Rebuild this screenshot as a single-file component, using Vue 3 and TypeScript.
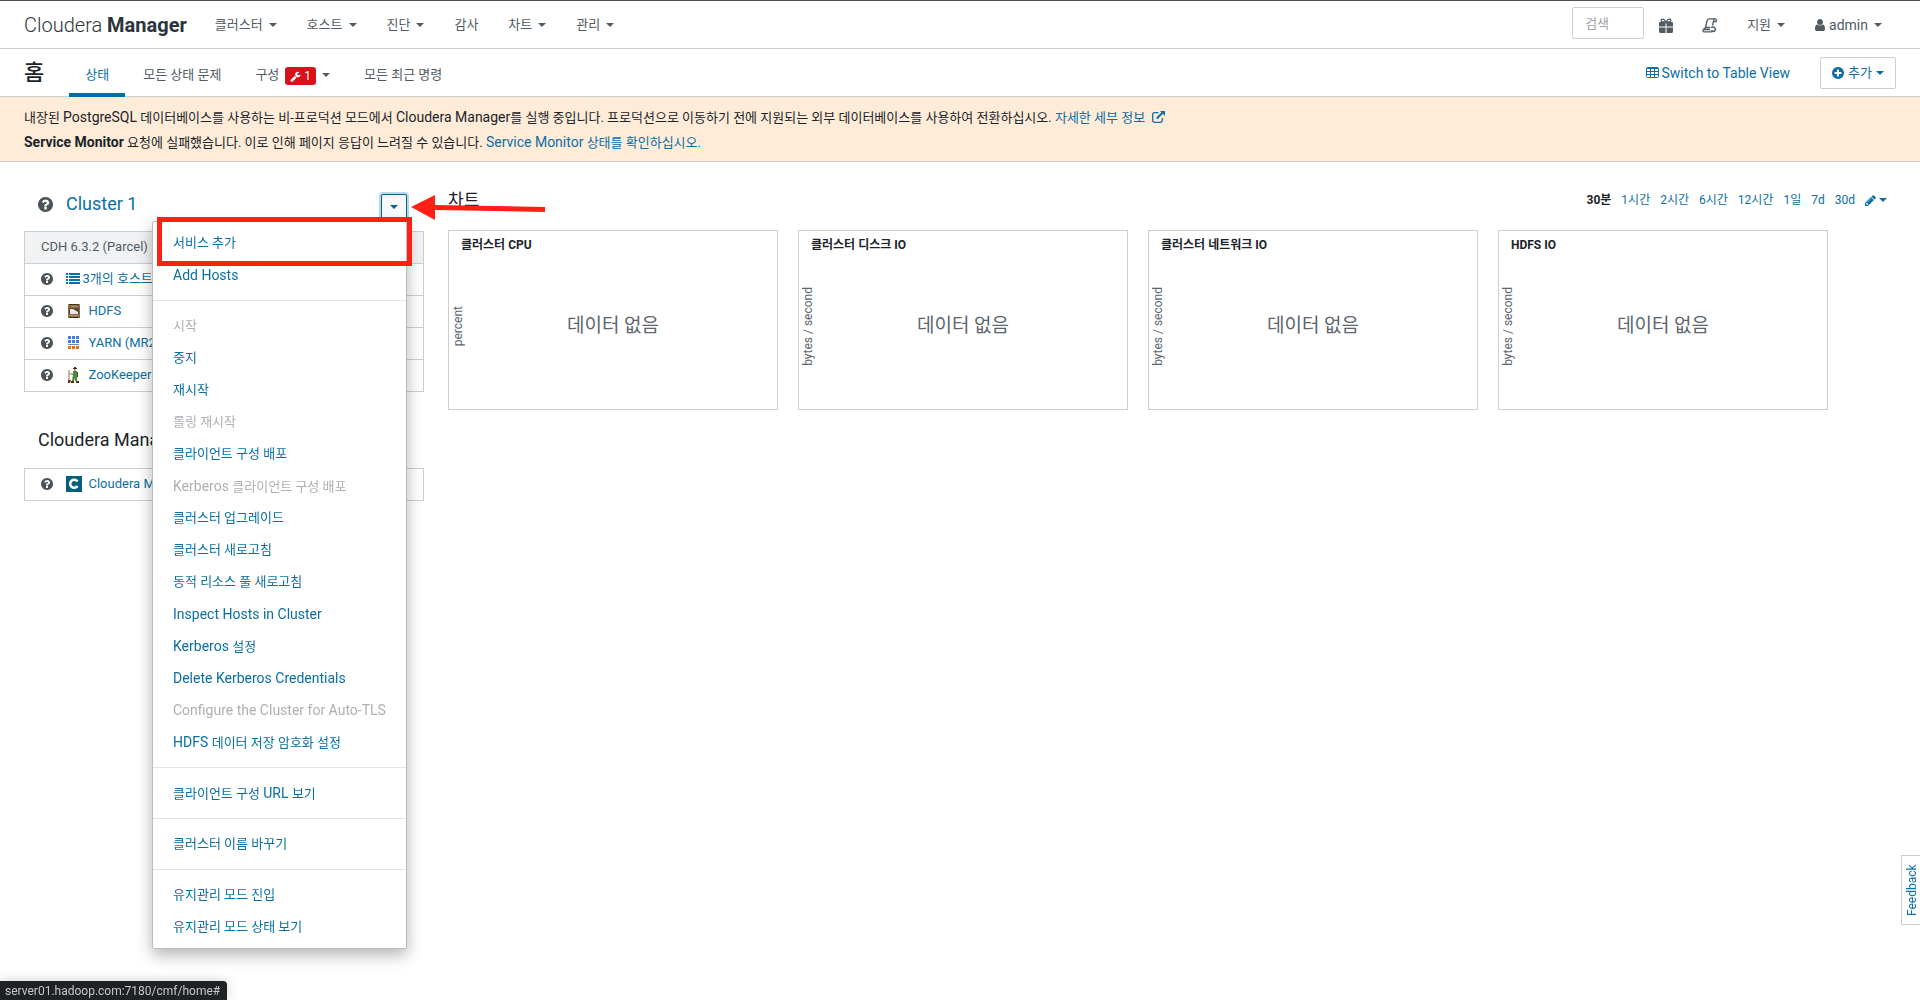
<script setup lang="ts">
import { ref } from 'vue'

interface NavItem { label: string; caret: boolean }
interface MenuItem { label: string; disabled?: boolean }
interface Chart { title: string; unit: string }
interface Run { text: string; latin: boolean }

const search = ref('')

const nav: NavItem[] = [
  { label: '클러스터', caret: true },
  { label: '호스트', caret: true },
  { label: '진단', caret: true },
  { label: '감사', caret: false },
  { label: '차트', caret: true },
  { label: '관리', caret: true },
]

const menu: MenuItem[][] = [
  [{ label: '서비스 추가' }, { label: 'Add Hosts' }],
  [
    { label: '시작', disabled: true },
    { label: '중지' },
    { label: '재시작' },
    { label: '롤링 재시작', disabled: true },
    { label: '클라이언트 구성 배포' },
    { label: 'Kerberos 클라이언트 구성 배포', disabled: true },
    { label: '클러스터 업그레이드' },
    { label: '클러스터 새로고침' },
    { label: '동적 리소스 풀 새로고침' },
    { label: 'Inspect Hosts in Cluster' },
    { label: 'Kerberos 설정' },
    { label: 'Delete Kerberos Credentials' },
    { label: 'Configure the Cluster for Auto-TLS', disabled: true },
    { label: 'HDFS 데이터 저장 암호화 설정' },
  ],
  [{ label: '클라이언트 구성 URL 보기' }],
  [{ label: '클러스터 이름 바꾸기' }],
  [{ label: '유지관리 모드 진입' }, { label: '유지관리 모드 상태 보기' }],
]

// Latin words are set one size larger than the Hangul around them.
function runs(label: string): Run[] {
  return label
    .split(/([A-Za-z][A-Za-z -]*)/)
    .filter((text) => text !== '')
    .map((text) => ({ text, latin: /^[A-Za-z]/.test(text) }))
}

const services = ['hosts', 'hdfs', 'yarn', 'zookeeper'] as const
const serviceNames: Record<(typeof services)[number], string> = {
  hosts: '3개의 호스트',
  hdfs: 'HDFS',
  yarn: 'YARN (MR2 Included)',
  zookeeper: 'ZooKeeper',
}

const charts: Chart[] = [
  { title: '클러스터 CPU', unit: 'percent' },
  { title: '클러스터 디스크 IO', unit: 'bytes / second' },
  { title: '클러스터 네트워크 IO', unit: 'bytes / second' },
  { title: 'HDFS IO', unit: 'bytes / second' },
]

const ranges = ['30분', '1시간', '2시간', '6시간', '12시간', '1일', '7d', '30d']

const questionPath =
  'M1024 1376v-192q0-14-9-23t-23-9h-192q-14 0-23 9t-9 23v192q0 14 9 23t23 9h192q14 0 23-9t9-23zm256-672q0-88-55.5-163t-138.5-116-170-41q-243 0-371 213-15 24 8 42l132 100q7 6 19 6 16 0 25-12 53-68 86-92 34-24 86-24 48 0 85.5 26t37.5 59q0 38-20 61t-68 45q-63 28-115.5 86.5t-52.5 125.5v36q0 14 9 23t23 9h192q14 0 23-9t9-23q0-19 21.5-49.5t54.5-49.5q32-18 49-28.5t46-35 44.5-48 28-60.5 12.5-81zm384 192q0 209-103 385.5t-279.5 279.5-385.5 103-385.5-103-279.5-279.5-103-385.5 103-385.5 279.5-279.5 385.5-103 385.5 103 279.5 279.5 103 385.5z'
</script>

<template>
  <div class="page">
    <header class="topbar">
      <a href="#" class="brand">Cloudera <b>Manager</b></a>
      <nav class="nav">
        <a v-for="n in nav" :key="n.label" href="#">{{ n.label }}<i v-if="n.caret" class="caret"></i></a>
      </nav>
      <div class="tools">
        <input v-model="search" class="search" type="text" placeholder="검색" aria-label="검색" />
        <button class="icon-btn gift" type="button" aria-label="Parcel">
          <svg width="14" height="15" viewBox="0 0 14 15" fill="currentColor">
            <path d="M7 4.500C5.500 .5 2 .2 2.200 2.600 2.300 4 4.500 4.300 7 4.500 9.500 4.300 11.700 4 11.800 2.600 12 .2 8.500 .5 7 4.500z" fill="none" stroke="currentColor" stroke-width="1.300" />
            <path d="M1 4h5.500v4.500H0V5a1 1 0 0 1 1-1zM7.500 4H13a1 1 0 0 1 1 1v3.500H7.500zM0 9.500h6.500V15H1.500A1.500 1.500 0 0 1 0 13.500zM7.500 9.500H14v4a1.500 1.500 0 0 1-1.500 1.500h-5z" />
          </svg>
        </button>
        <button class="icon-btn scroll" type="button" aria-label="최근 명령">
          <svg width="16" height="15" viewBox="0 0 16 15" fill="none" stroke="currentColor" stroke-width="1.300">
            <path d="M3.500 9.500 5 3C5.300 1.500 6 .8 7 .8h6.200c1 0 1.500 1.200 1 2.700h-2.500M12.500 1c-1 .5-1 2-1.300 3.500l-.6 3M8 11.500H2.200C.6 11.500.5 13.800 2 13.800h7.500M1.500 11.300 3.500 9.500H8" />
            <path d="M9.300 9.800a2.300 2.300 0 1 1 .3 3.200" stroke-width="1.500" />
            <path d="m8.500 12.500 2.500-.5-1.200 2.400z" fill="currentColor" stroke="none" />
          </svg>
        </button>
        <a href="#" class="support">지원<i class="caret"></i></a>
        <a href="#" class="user">
          <svg width="10" height="12" viewBox="256 128 1280 1536" fill="currentColor">
            <path d="M1536 1399q0 109-62.500 187t-150.500 78h-854q-88 0-150.500-78t-62.500-187q0-85 8.500-160.500t31.500-152 58.500-131 94-89 134.500-34.500q131 128 313 128t313-128q76 0 134.500 34.500t94 89 58.500 131 31.500 152 8.500 160.500zm-256-887q0 159-112.500 271.500t-271.500 112.500-271.500-112.500-112.500-271.500 112.500-271.500 271.500-112.500 271.500 112.500 112.500 271.500z" />
          </svg>
          <span>admin</span><i class="caret"></i>
        </a>
      </div>
    </header>

    <div class="subbar">
      <h1>홈</h1>
      <nav class="tabs">
        <a href="#" class="active">상태</a>
        <a href="#">모든 상태 문제</a>
        <a href="#">구성
          <span class="badge">
            <svg width="11" height="11" viewBox="0 0 1792 1792" fill="currentColor">
              <path d="M448 1472q0-26-19-45t-45-19-45 19-19 45 19 45 45 19 45-19 19-45zm644-420l-682 682q-37 37-90 37-52 0-91-37l-106-108q-38-36-38-90 0-53 38-91l681-681q39 98 114.500 173.500t173.500 114.500zm634-435q0 39-23 106-47 134-164.500 217.500t-258.500 83.500q-185 0-316.500-131.500t-131.500-316.500 131.500-316.500 316.500-131.500q58 0 121.500 16.500t107.500 46.500q16 11 16 28t-16 28l-293 169v224l193 107q5-3 79-48.500t135.500-81 70.500-35.500q15 0 23.500 10t8.500 25z" />
            </svg>
            <span>1</span>
          </span>
          <i class="caret"></i>
        </a>
        <a href="#">모든 최근 명령</a>
      </nav>
      <div class="actions">
        <a href="#" class="switch">
          <svg width="13" height="11" viewBox="0 0 13 11" fill="none" stroke="currentColor">
            <rect x=".5" y=".5" width="12" height="10" rx="1" />
            <path d="M1 1.500h11M1 4.500h11M1 7.500h11M4.500 1v9M8.500 1v9" />
          </svg>
          Switch to Table View
        </a>
        <button class="add" type="button">
          <svg width="12" height="12" viewBox="128 128 1536 1536" fill="currentColor">
            <path d="M1344 960v-128q0-26-19-45t-45-19h-256v-256q0-26-19-45t-45-19h-128q-26 0-45 19t-19 45v256h-256q-26 0-45 19t-19 45v128q0 26 19 45t45 19h256v256q0 26 19 45t45 19h128q26 0 45-19t19-45v-256h256q26 0 45-19t19-45zm320-64q0 209-103 385.500t-279.500 279.500-385.500 103-385.500-103-279.500-279.500-103-385.500 103-385.500 279.500-279.500 385.500-103 385.500 103 279.500 279.500 103 385.500z" />
          </svg>
          <span>추가</span><i class="caret"></i>
        </button>
      </div>
    </div>

    <section class="notice">
      <p>
        내장된 <span class="name">PostgreSQL</span> 데이터베이스를 사용하는 비-프로덕션 모드에서 <span class="name">Cloudera Manager</span>를 실행 중입니다. 프로덕션으로 이동하기 전에 지원되는 외부 데이터베이스를 사용하여 전환하십시오.
        <a href="#">자세한 세부 정보
          <svg class="ext" width="13" height="12" viewBox="0 0 13 12" fill="none" stroke="currentColor" stroke-width="1.300">
            <path d="M6.500 1.700H2.500A1.800 1.800 0 0 0 .7 3.500v6a1.800 1.800 0 0 0 1.800 1.800h6a1.800 1.800 0 0 0 1.800-1.800V7" />
            <path d="M4.800 7.500 10.500 1.800" stroke-width="2" />
            <path d="M8 0h5v5z" fill="currentColor" stroke="none" />
          </svg>
        </a>
      </p>
      <p>
        <b class="name">Service Monitor</b> 요청에 실패했습니다. 이로 인해 페이지 응답이 느려질 수 있습니다.
        <a href="#"><span class="name">Service Monitor</span> 상태를 확인하십시오.</a>
      </p>
    </section>

    <main class="content">
      <aside class="side">
        <div class="cluster-head">
          <svg class="q" width="15" height="15" viewBox="128 128 1536 1536"><path :d="questionPath" /></svg>
          <h2><a href="#">Cluster 1</a></h2>
          <div class="dropdown">
            <button class="toggle" type="button" aria-label="Cluster 1"><i class="caret"></i></button>
            <div class="menu">
              <ul v-for="(group, g) in menu" :key="g">
                <li v-for="m in group" :key="m.label">
                  <a href="#" :class="{ disabled: m.disabled }"><span v-for="(r, i) in runs(m.label)" :key="i" :class="{ latin: r.latin }">{{ r.text }}</span></a>
                </li>
              </ul>
              <div class="highlight"></div>
            </div>
            <svg class="arrow" width="134" height="26" viewBox="0 0 134 26" fill="#ff2015">
              <path d="M0 12 24 0V10L134 12V17L24 15V25z" />
            </svg>
          </div>
        </div>

        <table class="services">
          <thead>
            <tr><th colspan="2">CDH 6.3.2 (Parcel)</th></tr>
          </thead>
          <tbody>
            <tr v-for="s in services" :key="s">
              <td class="status"><svg class="q" width="12" height="12" viewBox="128 128 1536 1536"><path :d="questionPath" /></svg></td>
              <td>
                <a href="#" :class="['service', s]">
                  <svg v-if="s === 'hosts'" width="14" height="11" viewBox="0 0 14 11" fill="currentColor">
                    <path d="M0 0h2v2H0zM3 0h11v2H3zM0 3h2v2H0zM3 3h11v2H3zM0 6h2v2H0zM3 6h11v2H3zM0 9h2v2H0zM3 9h11v2H3z" />
                  </svg>
                  <svg v-else-if="s === 'hdfs'" width="16" height="16" viewBox="0 0 16 16">
                    <path d="M3 1h10l1 2v11l-1 1H3l-1-1V3z" fill="#8a6a42" />
                    <path d="M3 1h10l1 1H2zM2 14h12l-1 1H3z" fill="#4d3517" />
                    <path d="M3 5h10v6H3z" fill="#5c4526" />
                    <path d="M4 6h3l5 3v2H4z" fill="#e8e6ef" />
                    <path d="M5 3h6v1H5zM3 12h10v1H3z" fill="#b39664" />
                  </svg>
                  <svg v-else-if="s === 'yarn'" width="16" height="16" viewBox="0 0 16 16">
                    <path d="M2 1h3v3H2zM6 1h3v3H6zM10 1h3v3h-3zM2 5h3v3H2zM6 5h3v3H6zM10 5h3v3h-3z" fill="#3f7fd6" />
                    <path d="M2 9h11v1H2z" fill="#7b8790" />
                    <path d="M2 11h3v3H2zM6 11h3v3H6zM10 11h3v3h-3z" fill="#e5701c" />
                  </svg>
                  <svg v-else width="16" height="16" viewBox="0 0 16 16">
                    <path d="M3 3v12" stroke="#8c6a4a" />
                    <path d="M2 13h3l-1 3H2z" fill="#5a3a22" />
                    <path d="M7 1h4v1H7zM8 0h2v1H8z" fill="#263a5c" />
                    <path d="M8 2h2v2H8z" fill="#c98a5e" />
                    <path d="M7 4h4l1 6h-1v4H9v-3l-1 3H6l1-6-3-1V6l3 1z" fill="#4f8a3c" />
                    <path d="M11 5h1v5h-1z" fill="#2f5c26" />
                    <path d="M5 14h3v2H5zM10 14h3v2h-3z" fill="#4a2f1c" />
                  </svg>
                  <span>{{ serviceNames[s] }}</span>
                </a>
              </td>
            </tr>
          </tbody>
        </table>

        <h2 class="mgmt-title">Cloudera Management Service</h2>
        <table class="services">
          <tbody>
            <tr>
              <td class="status"><svg class="q" width="12" height="12" viewBox="128 128 1536 1536"><path :d="questionPath" /></svg></td>
              <td>
                <a href="#" class="service">
                  <svg width="16" height="16" viewBox="0 0 16 16">
                    <path d="M0 0h16v16H0z" fill="#045f7d" />
                    <path d="M11.500 5.500A4 4 0 1 0 11.500 10" fill="none" stroke="#fff" stroke-width="2.500" />
                  </svg>
                  <span>Cloudera Management Service</span>
                </a>
              </td>
            </tr>
          </tbody>
        </table>
      </aside>

      <section class="charts">
        <div class="charts-head">
          <h2>차트</h2>
          <div class="ranges">
            <a v-for="(r, i) in ranges" :key="r" href="#" :class="{ current: i === 0 }">{{ r }}</a>
            <button class="edit" type="button" aria-label="편집">
              <svg width="11" height="11" viewBox="128 128 1536 1536" fill="currentColor">
                <path d="M491 1536l91-91-235-235-91 91v107h128v128h107zm523-928q0-22-22-22-10 0-17 7l-542 542q-7 7-7 17 0 22 22 22 10 0 17-7l542-542q7-7 7-17zm-54-192l416 416-832 832h-416v-416zm683 96q0 53-37 90l-166 166-416-416 166-165q36-38 90-38 53 0 91 38l235 234q37 39 37 91z" />
              </svg>
              <i class="caret"></i>
            </button>
          </div>
        </div>
        <div class="grid">
          <article v-for="c in charts" :key="c.title" class="chart">
            <h3>{{ c.title }}</h3>
            <div class="plot">
              <span class="unit">{{ c.unit }}</span>
              <span class="empty">데이터 없음</span>
            </div>
          </article>
        </div>
      </section>
    </main>

    <button class="feedback" type="button">Feedback</button>
    <div class="statusbar">server01.hadoop.com:7180/cmf/home#</div>
  </div>
</template>

<style>
body {
  margin: 0;
  background: #fff;
}
</style>

<style scoped>
* {
  box-sizing: border-box;
}
.page {
  min-height: 100vh;
  font: 13px/20px Roboto, 'Noto Sans CJK KR', sans-serif;
  color: #1b2329;
  border-top: 1px solid #505058;
}
a {
  color: #0b6fa4;
  text-decoration: none;
}
button {
  font: inherit;
  padding: 0;
  border: 0;
  background: none;
  cursor: pointer;
}
h1, h2, h3, p, ul {
  margin: 0;
  padding: 0;
  list-style: none;
  font-weight: 400;
}
svg {
  flex: none;
}
.caret {
  display: inline-block;
  flex: none;
  border: 4px solid transparent;
  border-top-color: currentColor;
  border-bottom: 0;
}
.topbar, .subbar {
  display: flex;
  align-items: center;
  height: 48px;
  padding: 0 24px;
  border-bottom: 1px solid #ccced2;
}
.topbar {
  padding-top: 1px;
}
.brand {
  font-size: 20px;
  font-weight: 300;
  color: #2b343a;
}
.brand b {
  font-weight: 700;
}
.nav {
  display: flex;
  gap: 30px;
  margin-left: 28px;
}
.nav a, .support, .user {
  display: flex;
  align-items: center;
  gap: 6px;
  color: #505b64;
}
.tools {
  display: flex;
  align-items: center;
  margin-left: auto;
  padding-right: 14px;
  color: #505b64;
}
.search {
  width: 72px;
  height: 32px;
  margin-bottom: 4px;
  padding: 0 12px;
  border: 1px solid #ccced2;
  border-radius: 2px;
  font: inherit;
  color: #1b2329;
}
.search::placeholder {
  color: #9da3a8;
}
.icon-btn {
  display: flex;
  color: #505b64;
}
.gift {
  margin-left: 15px;
}
.scroll {
  margin-left: 29px;
}
.support {
  margin-left: 29px;
}
.user {
  margin-left: 30px;
  font-size: 14px;
}
.user svg {
  margin-right: -2px;
}
h1 {
  font-size: 22px;
  font-weight: 500;
}
.tabs {
  display: flex;
  align-self: stretch;
  gap: 2px;
  margin: 0 0 -1px 25px;
}
.tabs a {
  display: flex;
  align-items: center;
  gap: 6px;
  padding: 7px 16px 0;
  border-bottom: 4px solid transparent;
  color: #505b64;
}
.tabs .active {
  color: #0b6fa4;
  border-color: #006ca9;
}
.badge {
  display: flex;
  align-items: center;
  gap: 3px;
  height: 18px;
  margin-top: 3px;
  padding: 0 5px;
  border-radius: 3px;
  background: #d9121a;
  color: #fff;
  font-size: 12px;
}
.actions {
  display: flex;
  align-items: center;
  gap: 30px;
  margin-left: auto;
}
.switch {
  display: flex;
  align-items: center;
  gap: 3px;
  font-size: 14px;
}
.add {
  display: flex;
  align-items: center;
  gap: 4px;
  height: 32px;
  padding: 0 11px;
  border: 1px solid #ccced2;
  border-radius: 2px;
  color: #0b6fa4;
}
.notice {
  padding: 8px 24px 6px;
  background: #feecd8;
  border-bottom: 1px solid #ccced2;
  line-height: 25px;
}
.name, .latin {
  font-size: 14px;
}
.notice b {
  font-weight: 700;
}
.ext {
  margin-left: 4px;
  vertical-align: -1px;
}
.content {
  display: flex;
  gap: 24px;
  padding: 26px 24px;
}
.side {
  flex: none;
  width: 400px;
}
.q {
  display: block;
  fill: #4a5359;
}
h2 {
  font-size: 18px;
  line-height: 24px;
}
.cluster-head {
  display: flex;
  align-items: center;
  gap: 13px;
  height: 32px;
  margin-bottom: 11px;
  padding: 0 17px 0 14px;
}
.dropdown {
  position: relative;
  margin-left: auto;
  padding-top: 6px;
}
.toggle {
  display: flex;
  align-items: center;
  justify-content: center;
  width: 26px;
  height: 26px;
  border: 1px solid #0b5c92;
  border-radius: 2px;
  background: #f7f9fa;
  box-shadow: 0 0 0 2px #b5d8ea;
  color: #0b5c92;
}
.menu {
  position: absolute;
  z-index: 2;
  top: 33px;
  right: 0;
  width: 255px;
  padding: 5px 0;
  background: #fff;
  border: 1px solid #b9bbbd;
  border-radius: 2px;
  box-shadow: 0 6px 16px rgba(0, 0, 0, 0.3);
}
.menu ul + ul {
  margin-top: 9px;
  padding-top: 9px;
  border-top: 1px solid #e3e4e6;
}
.menu a {
  display: block;
  height: 32px;
  padding: 0 20px;
  line-height: 32px;
  white-space: pre;
}
.menu .disabled {
  color: #adb0b3;
}
.highlight {
  position: absolute;
  top: -5px;
  left: 4px;
  width: 255px;
  height: 49px;
  border: 5px solid #ff2015;
  pointer-events: none;
}
.arrow {
  position: absolute;
  z-index: 1;
  top: 7px;
  left: 30px;
}
.services {
  width: 100%;
  border-collapse: collapse;
}
.services th, .services td {
  height: 32px;
  padding: 0 0 2px;
  border: 1px solid #ccced2;
  border-width: 1px 0;
  text-align: left;
  font-weight: 400;
}
.services tr > :first-child {
  padding-left: 16px;
  border-left-width: 1px;
}
.services tr > :last-child {
  border-right-width: 1px;
}
.services th {
  background: #f1f2f4;
  color: #505b64;
}
.services .status {
  width: 41px;
}
.service {
  display: flex;
  align-items: center;
  gap: 7px;
}
.service.hosts {
  gap: 3px;
}
.mgmt-title {
  margin: 36px 0 16px 14px;
}
.charts {
  flex: 1;
  min-width: 0;
}
.charts-head {
  display: flex;
  align-items: center;
  justify-content: space-between;
  height: 24px;
  margin-bottom: 18px;
}
.charts-head h2 {
  font-size: 17px;
}
.ranges {
  display: flex;
  align-items: center;
  gap: 10px;
  padding-right: 9px;
  font-size: 12px;
}
.ranges .current {
  color: #1b2329;
  font-weight: 700;
}
.edit {
  display: flex;
  align-items: center;
  gap: 3px;
  color: #0b6fa4;
}
.grid {
  display: grid;
  grid-template-columns: repeat(auto-fill, 330px);
  gap: 20px;
}
.chart {
  display: flex;
  flex-direction: column;
  height: 180px;
  border: 1px solid #ccced2;
}
.chart h3 {
  padding: 4px 12px;
  font-size: 12px;
  font-weight: 700;
}
.plot {
  display: flex;
  align-items: center;
  flex: 1;
  padding-bottom: 16px;
  color: #5b666e;
}
.unit {
  width: 18px;
  font-size: 12px;
  line-height: 18px;
  writing-mode: vertical-rl;
  transform: rotate(180deg);
}
.empty {
  flex: 1;
  padding-right: 18px;
  text-align: center;
  font-size: 19px;
}
.feedback {
  position: fixed;
  right: 0;
  bottom: 75px;
  width: 19px;
  height: 70px;
  padding-right: 2px;
  border: 1px solid #ccced2;
  border-left: 0;
  background: #fff;
  color: #0b6fa4;
  font-size: 12px;
  line-height: 16px;
  writing-mode: vertical-rl;
  transform: rotate(180deg);
}
.statusbar {
  position: fixed;
  left: 0;
  bottom: 0;
  padding: 2px 7px 0 5px;
  border-radius: 0 4px 0 0;
  background: #202124;
  box-shadow: 0 0 12px rgba(0, 0, 0, 0.2);
  color: #c4c7cb;
  font-size: 12px;
  line-height: 17px;
}
</style>
